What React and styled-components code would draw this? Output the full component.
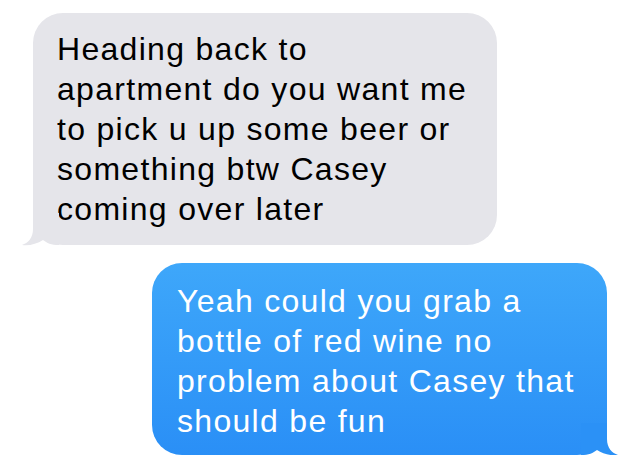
import styled, { createGlobalStyle } from "styled-components";

const GlobalStyle = createGlobalStyle`
  html, body {
    margin: 0;
    padding: 0;
    background: #ffffff;
  }
`;

const messages = [
  {
    id: 1,
    fromMe: false,
    lines: [
      "Heading back to",
      "apartment do you want me",
      "to pick u up some beer or",
      "something btw Casey",
      "coming over later",
    ],
  },
  {
    id: 2,
    fromMe: true,
    lines: [
      "Yeah could you grab a",
      "bottle of red wine no",
      "problem about Casey that",
      "should be fun",
    ],
  },
];

// horn shaped tail, drawn from the bubble's bottom corner
const tailPath =
  "M24 -32 L0 -32 L0 -16 C0 -7 -5 -2 -11 0 C-4 1 4 -1 10 -5 C14 -2 18 0 26 0 L26 -32 Z";

const App = () => {
  return (
    <>
      <GlobalStyle />
      <Thread>
        {messages.map((m) => (
          <Bubble key={m.id} $me={m.fromMe}>
            {m.lines.map((l, i) => (
              <Line key={i}>{l}</Line>
            ))}
            <Tail $me={m.fromMe} viewBox="-12 -32 40 34" width="40" height="34">
              <path d={tailPath} fill={m.fromMe ? "#2b91f6" : "#e5e5ea"} />
            </Tail>
          </Bubble>
        ))}
      </Thread>
    </>
  );
};

export default App;

const Thread = styled.div`
  display: flex;
  flex-direction: column;
  gap: 18px;
  padding-top: 13px;
  font-family: "Liberation Sans", Arial, sans-serif;
`;

const Bubble = styled.div`
  position: relative;
  box-sizing: border-box;
  width: ${(p) => (p.$me ? "455px" : "464px")};
  margin-left: ${(p) => (p.$me ? "152px" : "33px")};
  padding: ${(p) => (p.$me ? "18px 10px 14px 25px" : "16px 10px 16px 24px")};
  border-radius: 30px;
  font-size: 32px;
  line-height: 40px;
  letter-spacing: 1.3px;
  color: ${(p) => (p.$me ? "#ffffff" : "#000000")};
  background: ${(p) =>
    p.$me ? "linear-gradient(180deg, #3ea7fa 0%, #2a8ff6 100%)" : "#e5e5ea"};
`;

const Line = styled.div`
  white-space: nowrap;
`;

const Tail = styled.svg`
  position: absolute;
  bottom: -2px;
  ${(p) => (p.$me ? "right: -12px; transform: scaleX(-1);" : "left: -12px;")}
  width: 40px;
  height: 34px;
`;
